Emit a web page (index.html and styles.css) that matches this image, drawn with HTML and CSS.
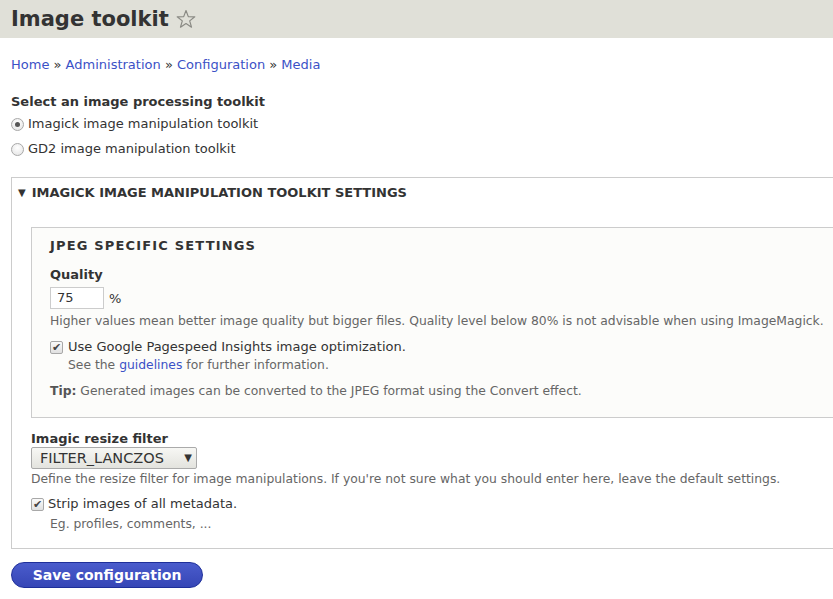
FILE: index.html
```html
<!DOCTYPE html>
<html>
<head>
<meta charset="utf-8">
<link rel="stylesheet" href="styles.css">
</head>
<body>
<header class="page-header">
  <h1 class="page-title">Image toolkit <svg class="star" width="20" height="20" viewBox="0 0 20 20"><path d="M10 1.5 L12.3 7.6 L18.8 7.8 L13.7 11.9 L15.5 18.2 L10 14.6 L4.5 18.2 L6.3 11.9 L1.2 7.8 L7.7 7.6 Z" fill="none" stroke="#8a8a84" stroke-width="1.2" stroke-linejoin="round"/></svg></h1>
</header>
<main class="content">
  <nav class="breadcrumb">
    <a href="#">Home</a> » <a href="#">Administration</a> » <a href="#">Configuration</a> » <a href="#">Media</a>
  </nav>
  <div class="form-item">
    <div class="label">Select an image processing toolkit</div>
    <label class="radio-row first"><span class="radio checked"></span>Imagick image manipulation toolkit</label>
    <label class="radio-row"><span class="radio"></span>GD2 image manipulation toolkit</label>
  </div>
  <section class="fieldset">
    <div class="legend"><span class="tri">▼</span>IMAGICK IMAGE MANIPULATION TOOLKIT SETTINGS</div>
    <div class="fieldset-body">
      <section class="inner-fieldset">
        <div class="inner-legend">JPEG SPECIFIC SETTINGS</div>
        <div class="label">Quality</div>
        <div class="quality-row"><span class="text-input">75</span><span>%</span></div>
        <div class="desc">Higher values mean better image quality but bigger files. Quality level below 80% is not advisable when using ImageMagick.</div>
        <label class="check-row"><span class="checkbox">✔</span>Use Google Pagespeed Insights image optimization.</label>
        <div class="desc indent">See the <a href="#">guidelines</a> for further information.</div>
        <div class="tip"><b>Tip:</b> Generated images can be converted to the JPEG format using the Convert effect.</div>
      </section>
      <div class="label filter-label">Imagic resize filter</div>
      <div class="select"><span>FILTER_LANCZOS</span><span class="arrow">▼</span></div>
      <div class="desc after-select">Define the resize filter for image manipulations. If you're not sure what you should enter here, leave the default settings.</div>
      <label class="check-row strip"><span class="checkbox">✔</span>Strip images of all metadata.</label>
      <div class="desc indent2">Eg. profiles, comments, ...</div>
    </div>
  </section>
  <div class="actions"><button class="save">Save configuration</button></div>
</main>
</body>
</html>
```
FILE: styles.css
```css
html, body { margin: 0; padding: 0; }
body {
  font-family: "DejaVu Sans", sans-serif;
  font-size: 13px;
  color: #333;
  background: #fff;
  overflow: hidden;
}
.page-header {
  background: #e0e0d8;
  height: 38px;
  padding: 0 11px;
}
.page-title {
  margin: 0;
  font-size: 21px;
  line-height: 38px;
  font-weight: bold;
  color: #333;
  display: flex;
  align-items: center;
}
.star { margin-left: 7px; margin-top: -1px; }
.content { padding: 0 0 0 11px; }
.breadcrumb {
  margin-top: 19px;
  line-height: 16px;
  color: #333;
}
.breadcrumb a, .desc a { color: #3b51c6; text-decoration: none; }
.form-item { margin-top: 21px; }
.label { font-weight: bold; line-height: 16px; }
.radio-row { display: flex; align-items: center; margin-top: 9px; line-height: 16px; }
.radio-row.first { margin-top: 6px; }
.radio {
  width: 11px; height: 11px; border-radius: 50%;
  border: 1px solid #a8a8a8;
  background: radial-gradient(circle at 50% 35%, #fff, #e2e2e2);
  margin: 0 4px 0 0;
  box-sizing: content-box;
  display: flex; align-items: center; justify-content: center;
}
.radio.checked::after {
  content: ""; width: 5px; height: 5px; border-radius: 50%;
  background: #555;
}
.fieldset {
  margin-top: 20px;
  border: 1px solid #ccc;
  border-right: none;
}
.legend {
  font-weight: bold;
  padding: 7px 0 0 6px;
  line-height: 16px;
  display: flex;
  align-items: center;
}
.tri { font-size: 10px; margin-right: 6px; }
.fieldset-body { padding: 26px 0 16px 19px; }
.inner-fieldset {
  border: 1px solid #ccc;
  border-right: none;
  background: #fcfcfa;
  padding: 10px 0 18px 18px;
}
.inner-legend { font-weight: bold; letter-spacing: 0.09em; line-height: 16px; margin-bottom: 13px; }
.quality-row { display: flex; align-items: center; margin-top: 4px; }
.text-input {
  width: 46px; height: 20px; line-height: 20px;
  border: 1px solid #ccc; padding: 0 0 0 6px; margin: 0 5px 0 0;
  background: #fff; color: #333;
}
.desc { color: #666; line-height: 16px; margin-top: 4px; font-size: 12.35px; }
.check-row { display: flex; align-items: center; margin-top: 10px; line-height: 16px; }
.checkbox {
  width: 11px; height: 11px; border: 1px solid #a8a8a8; border-radius: 2px;
  background: linear-gradient(#fafafa, #e0e0e0);
  margin: 0 5px 0 0; font-size: 11px; line-height: 11px; text-align: center;
  color: #444; box-sizing: content-box; overflow: hidden;
}
.indent { margin-left: 18px; margin-top: 2px; }
.indent2 { margin-left: 19px; margin-top: 4px; }
.tip { color: #666; margin-top: 10px; font-size: 12.35px; line-height: 16px; }
.tip b { color: #555; }
.filter-label { margin-top: 13px; }
.select {
  margin-top: 0;
  width: 156px; height: 20px;
  border: 1px solid #aaa; border-radius: 2px;
  background: linear-gradient(#f7f7f4, #e3e3de);
  display: flex; align-items: center; justify-content: space-between;
  padding-left: 8px;
  font-size: 14.5px;
  line-height: 20px;
}
.arrow { font-size: 10px; margin-right: 4px; }
.after-select { margin-top: 2px; }
.strip { margin-top: 9px; }
.strip .checkbox { margin-right: 4px; }
.actions { margin-top: 13px; line-height: 0; }
.save {
  width: 192px; height: 26px;
  border: 1px solid #1e2f9a;
  border-radius: 13px;
  background: linear-gradient(#4a5ccc, #3646b6);
  color: #fff; font: bold 14px "DejaVu Sans", sans-serif;
  line-height: 24px;
  padding: 0;
}
```
